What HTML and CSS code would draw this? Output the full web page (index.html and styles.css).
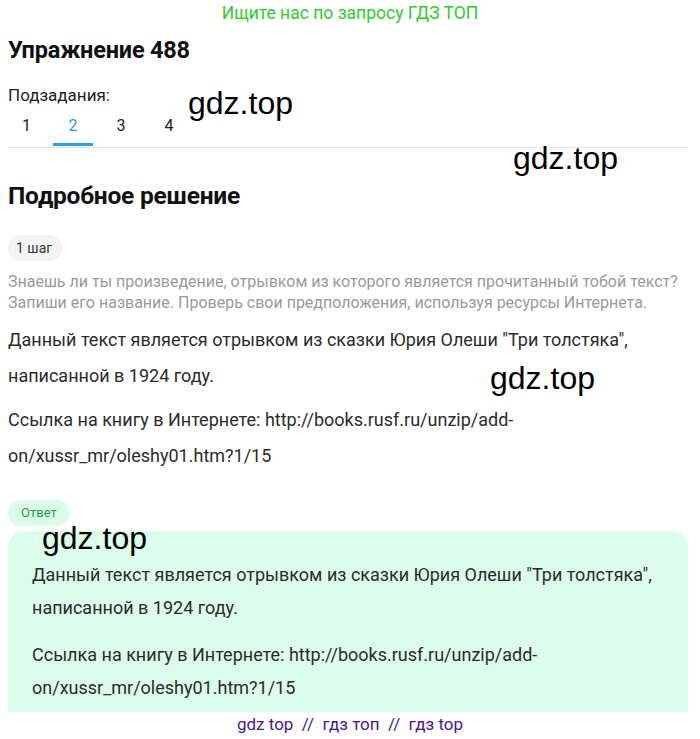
FILE: index.html
```html
<!DOCTYPE html>
<html lang="ru">
<head>
<meta charset="utf-8">
<title>Упражнение 488</title>
<link rel="stylesheet" href="styles.css">
</head>
<body>
<div class="banner">Ищите нас по запросу ГДЗ ТОП</div>
<main class="page">
  <h1 class="title">Упражнение 488</h1>
  <div class="subtasks">
    <div class="sub-label">Подзадания:</div>
    <nav class="tabs">
      <span class="tab">1</span>
      <span class="tab active">2</span>
      <span class="tab">3</span>
      <span class="tab">4</span>
    </nav>
  </div>
  <h2 class="section">Подробное решение</h2>
  <span class="pill step">1 шаг</span>
  <p class="question">Знаешь ли ты произведение, отрывком из которого является прочитанный тобой текст? Запиши его название. Проверь свои предположения, используя ресурсы Интернета.</p>
  <div class="solution">
    <p>Данный текст является отрывком из сказки Юрия Олеши "Три толстяка", написанной в 1924 году.</p>
    <p>Ссылка на книгу в Интернете: http://books.rusf.ru/unzip/add-on/xussr_mr/oleshy01.htm?1/15</p>
  </div>
  <span class="pill answer-pill">Ответ</span>
  <div class="answer">
    <p>Данный текст является отрывком из сказки Юрия Олеши "Три толстяка", написанной в 1924 году.</p>
    <p>Ссылка на книгу в Интернете: http://books.rusf.ru/unzip/add-on/xussr_mr/oleshy01.htm?1/15</p>
  </div>
</main>
<span class="wm wm1">gdz.top</span>
<span class="wm wm2">gdz.top</span>
<span class="wm wm3">gdz.top</span>
<span class="wm wm4">gdz.top</span>
<footer class="footer">gdz top &nbsp;//&nbsp; гдз топ &nbsp;//&nbsp; гдз top</footer>
</body>
</html>
```
FILE: styles.css
```css
html, body {
  margin: 0;
  padding: 0;
  background: #fff;
}
body {
  font-family: Roboto, "Liberation Sans", sans-serif;
  color: #222;
  position: relative;
  height: 739px;
  overflow: hidden;
}
.banner {
  text-align: center;
  color: #2fcb2f;
  font-size: 17.5px;
  line-height: 26px;
  height: 26px;
}
.page {
  padding: 0 12px 0 8px;
}
.title {
  margin: 10px 0 0;
  font-size: 23.5px;
  font-weight: 700;
  line-height: 28px;
  color: #111;
  letter-spacing: -0.2px;
}
.subtasks {
  margin-top: 21px;
}
.sub-label {
  font-size: 17px;
  line-height: 20px;
  color: #222;
}
.tabs {
  display: flex;
  border-bottom: 1px solid #e5e7eb;
  margin-top: 1px;
  height: 41px;
}
.tab {
  width: 40px;
  margin-right: 8px;
  text-align: center;
  font-size: 16px;
  line-height: 20px;
  padding-top: 10px;
  color: #222;
  box-sizing: border-box;
}
.tab:first-child {
  width: 37px;
}
.tab.active {
  color: #2a9bd6;
  border-bottom: 3px solid #2aa6de;
  height: 40px;
  margin-bottom: -2px;
  position: relative;
}
.section {
  margin: 34px 0 0;
  font-size: 24.5px;
  font-weight: 700;
  line-height: 28px;
  color: #111;
  letter-spacing: -0.2px;
}
.pill {
  display: inline-block;
  border-radius: 14px;
  font-size: 13px;
  line-height: 26px;
  height: 26px;
}
.step {
  margin-top: 25px;
  background: #f2f3f5;
  color: #333;
  font-size: 14px;
  padding: 0 10px 0 8px;
}
.question {
  margin: 10px 0 0;
  color: #9a9a9a;
  font-size: 16px;
  line-height: 21px;
}
.solution {
  margin-top: 9px;
}
.solution p {
  margin: 0 0 8px;
  font-size: 18px;
  line-height: 36px;
  color: #2b2b2b;
  max-width: 640px;
}
.answer-pill {
  margin-top: 18px;
  background: #dcfce8;
  color: #1f9a4a;
  padding: 0 13px;
}
.answer {
  margin-top: 5px;
  background: #dcfde9;
  border-radius: 16px 16px 0 0;
  padding: 27px 24px 40px;
  width: 680px;
  box-sizing: border-box;
}
.answer p {
  margin: 0 0 14px;
  font-size: 18px;
  line-height: 33px;
  color: #2b2b2b;
  max-width: 640px;
}
.wm {
  position: absolute;
  font-family: "Liberation Sans", Arial, sans-serif;
  font-size: 32px;
  line-height: 36px;
  color: #000;
}
.wm1 { left: 188px; top: 85px; }
.wm2 { left: 513px; top: 140px; }
.wm3 { left: 490px; top: 360px; }
.wm4 { left: 42px; top: 520px; }
.footer {
  position: absolute;
  left: 0;
  right: 0;
  bottom: 0;
  height: 27px;
  background: #fff;
  text-align: center;
  color: #4b1590;
  font-size: 17px;
  line-height: 24px;
}
```
